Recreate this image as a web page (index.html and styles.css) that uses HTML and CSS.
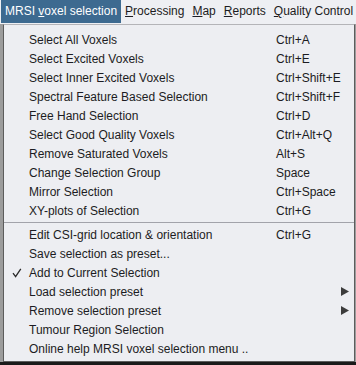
FILE: index.html
```html
<!DOCTYPE html>
<html lang="en">
<head>
  <meta charset="UTF-8">
  <title>MRSI voxel selection</title>
  <link rel="stylesheet" href="styles.css">
</head>
<body>

  <div class="menubar">
    <div class="menu active">MRSI <u>v</u>oxel selection</div>
    <div class="menu"><u>P</u>rocessing</div>
    <div class="menu"><u>M</u>ap</div>
    <div class="menu"><u>R</u>eports</div>
    <div class="menu"><u>Q</u>uality Control</div>
  </div>

  <div class="popup">
    <div class="row"><span class="mark"></span><span class="label">Select All Voxels</span><span class="key">Ctrl+A</span></div>
    <div class="row"><span class="mark"></span><span class="label">Select Excited Voxels</span><span class="key">Ctrl+E</span></div>
    <div class="row"><span class="mark"></span><span class="label">Select Inner Excited Voxels</span><span class="key">Ctrl+Shift+E</span></div>
    <div class="row"><span class="mark"></span><span class="label">Spectral Feature Based Selection</span><span class="key">Ctrl+Shift+F</span></div>
    <div class="row"><span class="mark"></span><span class="label">Free Hand Selection</span><span class="key">Ctrl+D</span></div>
    <div class="row"><span class="mark"></span><span class="label">Select Good Quality Voxels</span><span class="key">Ctrl+Alt+Q</span></div>
    <div class="row"><span class="mark"></span><span class="label">Remove Saturated Voxels</span><span class="key">Alt+S</span></div>
    <div class="row"><span class="mark"></span><span class="label">Change Selection Group</span><span class="key">Space</span></div>
    <div class="row"><span class="mark"></span><span class="label">Mirror Selection</span><span class="key">Ctrl+Space</span></div>
    <div class="row"><span class="mark"></span><span class="label">XY-plots of Selection</span><span class="key">Ctrl+G</span></div>

    <div class="separator"></div>

    <div class="row"><span class="mark"></span><span class="label">Edit CSI-grid location &amp; orientation</span><span class="key">Ctrl+G</span></div>
    <div class="row"><span class="mark"></span><span class="label">Save selection as preset...</span><span class="key"></span></div>
    <div class="row">
      <span class="mark">
        <svg width="10" height="10" viewBox="0 0 10 10"><path d="M1 5.2 L3.6 8.6 L8.8 0.8" fill="none" stroke="#2a2a2a" stroke-width="1.3"/></svg>
      </span>
      <span class="label">Add to Current Selection</span><span class="key"></span>
    </div>
    <div class="row">
      <span class="mark"></span><span class="label">Load selection preset</span><span class="key"></span>
      <span class="arrow"><svg width="8" height="9" viewBox="0 0 8 9"><polygon points="0,0 8,4.5 0,9" fill="#3c3c3c"/></svg></span>
    </div>
    <div class="row">
      <span class="mark"></span><span class="label">Remove selection preset</span><span class="key"></span>
      <span class="arrow"><svg width="8" height="9" viewBox="0 0 8 9"><polygon points="0,0 8,4.5 0,9" fill="#3c3c3c"/></svg></span>
    </div>
    <div class="row"><span class="mark"></span><span class="label">Tumour Region Selection</span><span class="key"></span></div>
    <div class="row"><span class="mark"></span><span class="label wide">Online help MRSI voxel selection menu ..</span></div>
  </div>

  <div class="under"></div>

</body>
</html>
```

FILE: styles.css
```css
body {
  margin: 0;
  font-family: 'Liberation Sans', Arial, sans-serif;
  font-size: 12px;
  color: #1c1c22;
  background-color: #9c9c9c;
  height: 365px;
  overflow: hidden;
}

.menubar {
  display: flex;
  height: 24px;
  line-height: 23px;
  padding-left: 1px;
  background: #eeeff3;
}

.menu {
  padding: 0 4px;
  white-space: nowrap;
}

.menu.active {
  background: #3d6a90;
  color: white;
  height: 23px;
}

.popup {
  margin-left: 3px;
  width: 350px;
  background: #edeef2;
  border: 1px solid #5c5c5c;
  border-top-color: #b4b4b8;
  padding: 5px 0 3px 0;
}

.row {
  display: flex;
  align-items: center;
  height: 19px;
  white-space: nowrap;
}

.mark {
  width: 25px;
  display: flex;
  justify-content: flex-end;
  padding-right: 7px;
  box-sizing: border-box;
}

.label {
  width: 247px;
}

.label.wide {
  width: auto;
}

.key {
  width: 65px;
}

.arrow {
  display: flex;
  align-items: center;
}

.separator {
  height: 1px;
  margin: 2px 0;
  background: #a2a3aa;
}

/* strip of the window behind the menu */
.under {
  height: 3px;
  background: #1a1a1a;
}
```
